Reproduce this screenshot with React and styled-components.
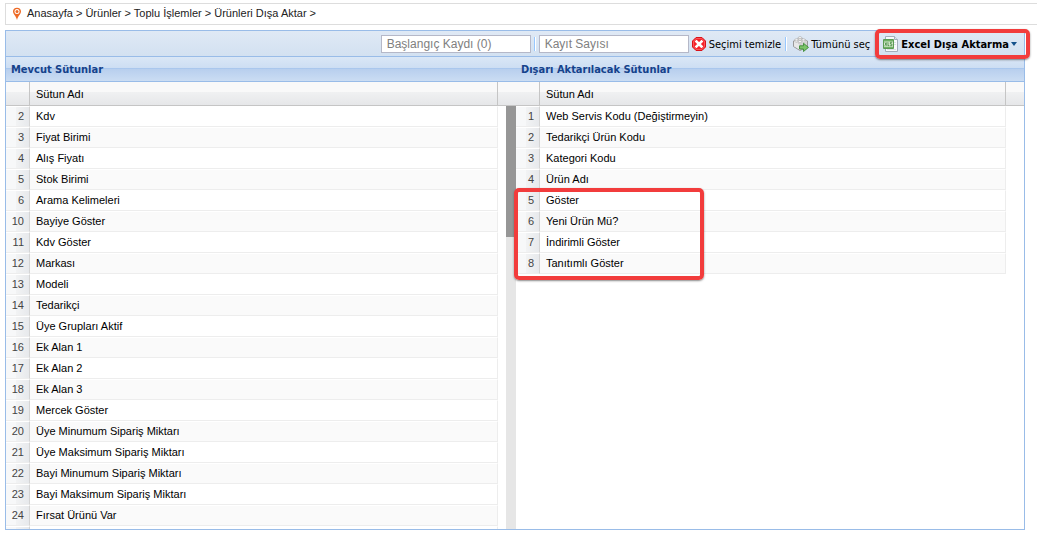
import React from 'react';
import styled, { createGlobalStyle } from 'styled-components';

const GlobalStyle = createGlobalStyle`
  * {
    box-sizing: border-box;
  }
  body {
    margin: 0;
    background: #fff;
    font: 11px 'Liberation Sans', Arial, sans-serif;
    color: #000;
  }
`;

const Page = styled.div`
  display: flex;
  flex-direction: column;
  gap: 5px;
  height: 100vh;
  padding: 3px 12px 12px 5px;
`;

const Breadcrumb = styled.nav`
  display: flex;
  flex: none;
  align-items: center;
  gap: 5px;
  height: 22px;
  margin-right: -12px;
  padding: 0 6px;
  border: 1px solid #ddd;
  border-right: 0;
  color: #222;

  a {
    color: inherit;
    text-decoration: none;
  }
`;

const Trail = styled.span`
  padding-bottom: 3px;
`;

const Panel = styled.main`
  display: flex;
  flex: 1;
  flex-direction: column;
  min-height: 0;
  border: 1px solid #99bce8;
`;

const Toolbar = styled.div`
  display: flex;
  flex: none;
  align-items: center;
  justify-content: flex-end;
  height: 26px;
  padding-right: 7px;
  border-bottom: 1px solid #99bce8;
  background: linear-gradient(#dfe9f5, #d3e1f1);
`;

const TextField = styled.input`
  width: 150px;
  height: 18px;
  padding: 0 5px;
  border: 1px solid #b5b8c8;
  border-radius: 0;
  background: #fff;
  font: 12px 'Liberation Sans', Arial, sans-serif;

  &::placeholder {
    color: #808080;
    opacity: 1;
  }
`;

const Separator = styled.span`
  width: 2px;
  height: 14px;
  margin: 0 ${(props) => props.$right}px 0 ${(props) => props.$left}px;
  border-left: 1px solid #98c8ff;
  border-right: 1px solid #fff;
`;

const ToolButton = styled.button`
  position: relative;
  display: flex;
  align-items: center;
  gap: 2px;
  height: 22px;
  margin-left: ${(props) => props.$left || 0}px;
  padding: 0;
  border: 0;
  background: none;
  color: #000;
  font: ${(props) => (props.$bold ? 'bold' : 'normal')} 11px Tahoma,
    'DejaVu Sans Condensed', 'DejaVu Sans', sans-serif;
  white-space: nowrap;
`;

const ButtonText = styled.span`
  padding-top: 2px;
`;

const Highlight = styled.span`
  position: absolute;
  z-index: 1;
  inset: ${(props) => props.$inset};
  border: 4px solid #f23c3c;
  border-radius: 5px;
  box-shadow: 0 1px 2px rgba(60, 60, 60, 0.6);
  pointer-events: none;
`;

const Grids = styled.div`
  display: flex;
  flex: 1;
  min-height: 0;
`;

const GridPanel = styled.section`
  flex: ${(props) => (props.$wide ? '0 0 calc(50% + 1px)' : '1')};
  min-width: 0;
`;

const GridBody = styled.div`
  position: relative;
  height: calc(100% - 25px);
  overflow: ${(props) => (props.$clip ? 'hidden' : 'visible')};
`;

const GridTitle = styled.h2`
  height: 25px;
  margin: 0;
  padding: 0 5px;
  border-bottom: 1px solid #99bce8;
  background: linear-gradient(
    #dae7f6,
    #cddef3 45%,
    #a9c7ee 46%,
    #abc7ec 50%,
    #b8cfee 51%,
    #cbddf3
  );
  color: #15428b;
  font: bold 11px/26px Tahoma, 'DejaVu Sans Condensed', 'DejaVu Sans',
    sans-serif;
`;

const Table = styled.table`
  width: 100%;
  border-spacing: 0;
  table-layout: fixed;

  th,
  td {
    padding: 0 6px;
    text-align: left;
    font-weight: normal;
    white-space: nowrap;
  }

  thead th,
  thead td {
    height: 24px;
    border-right: 1px solid #c5c5c5;
    border-bottom: 1px solid #c5c5c5;
    background: linear-gradient(#f9f9f9 42%, #f0f1f2 43%, #e6e7e9);
  }

  thead td:last-child {
    border-right: 0;
  }

  tbody td {
    height: 21px;
    padding-bottom: 2px;
    border-top: 1px solid #fff;
    border-bottom: 1px solid #ededed;
  }

  tbody tr:nth-child(even) td {
    background: #fafafa;
  }
`;

const NumberCell = styled.td`
  &&& {
    padding: 0 5px 2px 0;
    border-right: 1px solid #d4d4d4;
    color: #444;
    text-align: right;
  }

  tbody tr:nth-child(n) &&& {
    background: linear-gradient(90deg, #f7f8f9 10px, #f2f3f4 10px, #e7e9ec);
  }
`;

const NameCell = styled.td`
  border-right: 1px solid #ededed;
`;

const EmptyCell = styled.td`
  &&& {
    padding: 0;
    border: 0;
  }

  tbody tr:nth-child(n) &&& {
    background: #fff;
  }
`;

const ScrollTrack = styled.div`
  position: absolute;
  top: 24px;
  right: 0;
  bottom: 0;
  width: 10px;
  background: #e6e6e6;
`;

const ScrollThumb = styled.div`
  height: 31%;
  background: #969696;
`;

const available = [
  [2, 'Kdv'],
  [3, 'Fiyat Birimi'],
  [4, 'Alış Fiyatı'],
  [5, 'Stok Birimi'],
  [6, 'Arama Kelimeleri'],
  [10, 'Bayiye Göster'],
  [11, 'Kdv Göster'],
  [12, 'Markası'],
  [13, 'Modeli'],
  [14, 'Tedarikçi'],
  [15, 'Üye Grupları Aktif'],
  [16, 'Ek Alan 1'],
  [17, 'Ek Alan 2'],
  [18, 'Ek Alan 3'],
  [19, 'Mercek Göster'],
  [20, 'Üye Minumum Sipariş Miktarı'],
  [21, 'Üye Maksimum Sipariş Miktarı'],
  [22, 'Bayi Minumum Sipariş Miktarı'],
  [23, 'Bayi Maksimum Sipariş Miktarı'],
  [24, 'Fırsat Ürünü Var'],
  ['', ''],
];

const exported = [
  [1, 'Web Servis Kodu (Değiştirmeyin)'],
  [2, 'Tedarikçi Ürün Kodu'],
  [3, 'Kategori Kodu'],
  [4, 'Ürün Adı'],
  [5, 'Göster'],
  [6, 'Yeni Ürün Mü?'],
  [7, 'İndirimli Göster'],
  [8, 'Tanıtımlı Göster'],
];

const crumbs = ['Anasayfa', 'Ürünler', 'Toplu İşlemler', 'Ürünleri Dışa Aktar'];

const PinIcon = () => (
  <svg width='10' height='14' viewBox='0 0 10 14' aria-hidden='true'>
    <path
      d='M5 .8C2.500.8 1 2.500 1 4.600 1 7 3.600 8.400 5 13 6.400 8.400 9 7 9 4.600 9 2.500 7.500.8 5 .8z'
      fill='#ee6a25'
    />
    <circle cx='5' cy='4.500' r='2.500' fill='#fff' />
    <circle cx='5' cy='4.500' r='1.500' fill='#ee6a25' />
  </svg>
);

const ClearIcon = () => (
  <svg width='16' height='16' viewBox='0 0 16 16' aria-hidden='true'>
    <path
      d='M5 1.500h6L14.500 5v6L11 14.500H5L1.500 11V5z'
      fill='#f5222a'
      stroke='#d9121a'
      strokeLinejoin='round'
    />
    <path
      d='M5.300 2.500h5.400l2.800 2.800v5.400l-2.800 2.800H5.300l-2.800-2.800V5.300z'
      fill='none'
      stroke='#ff6a6a'
      strokeWidth='.7'
    />
    <path
      d='M5.500 5.500l5 5M10.500 5.500l-5 5'
      stroke='#fff'
      strokeWidth='2.600'
      strokeLinecap='square'
    />
  </svg>
);

const SelectAllIcon = () => (
  <svg width='16' height='16' viewBox='0 0 16 16' aria-hidden='true'>
    <path
      d='M.5 5L7 2l7.500 3v6L7 14.500.5 10.500z'
      fill='#d4d4d4'
      stroke='#999'
      strokeLinejoin='round'
    />
    <path d='M1 5l6-2.500L14 5 7 8z' fill='#f3f3f3' />
    <path d='M1 5.300L7 8.200v5.600L1 10.300z' fill='#e8e8e8' />
    <g fill='#fff' stroke='#aaa' strokeWidth='.7'>
      <path d='M5.300 1.700v1.600c0 1.200 3.400 1.200 3.400 0V1.700' />
      <ellipse cx='7' cy='1.700' rx='1.700' ry='1' />
      <path d='M1.800 3.800v1.500c0 1.200 3.400 1.200 3.400 0V3.800' />
      <ellipse cx='3.500' cy='3.800' rx='1.700' ry='1' />
      <path d='M8.800 3.800v1.500c0 1.200 3.400 1.200 3.400 0V3.800' />
      <ellipse cx='10.500' cy='3.800' rx='1.700' ry='1' />
      <path d='M5.300 5.500V7c0 1.200 3.400 1.200 3.400 0V5.500' />
      <ellipse cx='7' cy='5.500' rx='1.700' ry='1' />
    </g>
    <path
      d='M6.500 9.800h4V7.300l5 4.100-5 4.100V13h-4z'
      fill='#7cc46a'
      stroke='#3d8b37'
      strokeWidth='.9'
      strokeLinejoin='round'
    />
  </svg>
);

const ExcelIcon = () => (
  <svg width='17' height='16' viewBox='0 0 17 16' aria-hidden='true'>
    <path d='M3.500.5h9l3 3v12h-12z' fill='#f8fafc' stroke='#a3aebb' />
    <path d='M12.500.5v3h3' fill='#dfe6ec' stroke='#a3aebb' />
    <path
      d='M5 13.500h9M12 6.500h2M12 8.500h2'
      stroke='#cdd6de'
      strokeWidth='.7'
    />
    <path d='M1.500 3.500h10v9h-10z' fill='#d6e9cf' stroke='#5b9c54' />
    <path d='M2 4h9v1.500H2zM2 10.700h9V12H2z' fill='#6fb066' />
    <path
      d='M2.900 6.300l2 3.500M4.900 6.300l-2 3.500M6 6.300v3.300h1.300M10.200 6.300H8.400V8h1.500v1.700H8.100'
      fill='none'
      stroke='#3c8639'
      strokeWidth='.8'
    />
  </svg>
);

const ArrowIcon = () => (
  <svg width='6' height='4' viewBox='0 0 6 4' aria-hidden='true'>
    <path d='M0 0h6L3 4z' fill='#15528b' />
  </svg>
);

const ColumnTable = ({ rows, label }) => (
  <Table aria-label={label}>
    <colgroup>
      <col style={{ width: 24 }} />
      <col />
      <col style={{ width: 18 }} />
    </colgroup>
    <thead>
      <tr>
        <td />
        <th scope='col'>Sütun Adı</th>
        <td />
      </tr>
    </thead>
    <tbody>
      {rows.map(([number, name]) => (
        <tr key={number}>
          <NumberCell>{number}</NumberCell>
          <NameCell>{name}</NameCell>
          <EmptyCell />
        </tr>
      ))}
    </tbody>
  </Table>
);

const App = () => (
  <>
    <GlobalStyle />
    <Page>
      <Breadcrumb>
        <PinIcon />
        <Trail>
          {crumbs.map((crumb) => (
            <React.Fragment key={crumb}>
              <a href='#'>{crumb}</a>
              {' > '}
            </React.Fragment>
          ))}
        </Trail>
      </Breadcrumb>
      <Panel>
        <Toolbar>
          <TextField
            aria-label='Başlangıç Kaydı'
            placeholder='Başlangıç Kaydı (0)'
          />
          <Separator $left={3} $right={3} />
          <TextField aria-label='Kayıt Sayısı' placeholder='Kayıt Sayısı' />
          <ToolButton type='button' $left={2}>
            <ClearIcon />
            <ButtonText>Seçimi temizle</ButtonText>
          </ToolButton>
          <Separator $left={4} $right={6} />
          <ToolButton type='button'>
            <SelectAllIcon />
            <ButtonText>Tümünü seç</ButtonText>
          </ToolButton>
          <ToolButton type='button' $left={12} $bold>
            <ExcelIcon />
            <ButtonText>Excel Dışa Aktarma</ButtonText>
            <ArrowIcon />
            <Highlight $inset='-4px -13px -4px -7px' />
          </ToolButton>
        </Toolbar>
        <Grids>
          <GridPanel $wide>
            <GridTitle>Mevcut Sütunlar</GridTitle>
            <GridBody $clip>
              <ColumnTable rows={available} label='Mevcut Sütunlar' />
              <ScrollTrack>
                <ScrollThumb />
              </ScrollTrack>
            </GridBody>
          </GridPanel>
          <GridPanel>
            <GridTitle>Dışarı Aktarılacak Sütunlar</GridTitle>
            <GridBody>
              <ColumnTable
                rows={exported}
                label='Dışarı Aktarılacak Sütunlar'
              />
              <Highlight $inset='106px 320px 249px -2px' />
            </GridBody>
          </GridPanel>
        </Grids>
      </Panel>
    </Page>
  </>
);

export default App;
